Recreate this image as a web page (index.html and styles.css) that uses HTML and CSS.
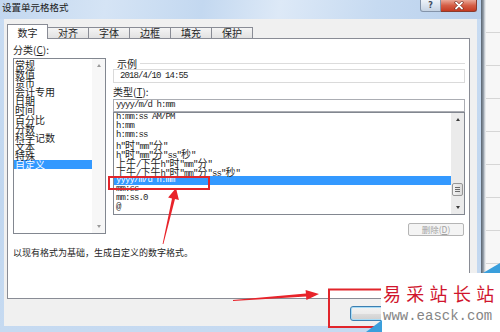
FILE: index.html
```html
<!DOCTYPE html>
<html lang="zh-CN">
<head>
<meta charset="utf-8">
<title>设置单元格格式</title>
<link rel="stylesheet" href="styles.css">
</head>
<body>
<div class="screen">
  <div class="window">
    <div class="titlebar">
      <span class="title">设置单元格格式</span>
      <div class="caption-btns">
        <span class="cbtn help">?</span>
        <span class="cbtn close"><svg width="12" height="9" viewBox="0 0 12 9"><path d="M3 1.5 L9 7.5 M9 1.5 L3 7.5" stroke="#6b1f14" stroke-width="3" stroke-linecap="round"/><path d="M3 1.5 L9 7.5 M9 1.5 L3 7.5" stroke="#ffffff" stroke-width="1.8" stroke-linecap="round"/></svg></span>
      </div>
    </div>
    <div class="client">
      <div class="tabs">
        <span class="tab active">数字</span>
        <span class="tab">对齐</span>
        <span class="tab">字体</span>
        <span class="tab">边框</span>
        <span class="tab">填充</span>
        <span class="tab">保护</span>
      </div>
      <div class="panel">
        <div class="left">
          <div class="label">分类(<u>C</u>):</div>
          <div class="listbox cat">
            <ul class="items">
              <li>常规</li>
              <li>数值</li>
              <li>货币</li>
              <li>会计专用</li>
              <li>日期</li>
              <li>时间</li>
              <li>百分比</li>
              <li>分数</li>
              <li>科学记数</li>
              <li>文本</li>
              <li>特殊</li>
              <li class="sel">自定义</li>
            </ul>
            <div class="vscroll light">
              <span class="arr up"></span>
              <span class="arr down"></span>
            </div>
          </div>
        </div>
        <div class="right">
          <div class="group-head"><span>示例</span></div>
          <div class="sample mono">2018/4/10 14:55</div>
          <div class="label">类型(<u>T</u>):</div>
          <div class="input mono">yyyy/m/d h:mm</div>
          <div class="listbox fmt">
            <ul class="items mono">
              <li>h:mm:ss AM/PM</li>
              <li>h:mm</li>
              <li>h:mm:ss</li>
              <li>h"<span class="c">时</span>"mm"<span class="c">分</span>"</li>
              <li>h"<span class="c">时</span>"mm"<span class="c">分</span>"ss"<span class="c">秒</span>"</li>
              <li><span class="c">上午</span>/<span class="c">下午</span>h"<span class="c">时</span>"mm"<span class="c">分</span>"</li>
              <li><span class="c">上午</span>/<span class="c">下午</span>h"<span class="c">时</span>"mm"<span class="c">分</span>"ss"<span class="c">秒</span>"</li>
              <li class="sel">yyyy/m/d h:mm</li>
              <li>mm:ss</li>
              <li>mm:ss.0</li>
              <li>@</li>
            </ul>
            <div class="vscroll dark">
              <span class="arr up"></span>
              <span class="track"></span>
              <span class="thumb"><i></i><i></i><i></i></span>
              <span class="arr down"></span>
            </div>
          </div>
          <div class="btnrow"><span class="btn-del">删除(<u>D</u>)</span></div>
        </div>
        <div class="desc">以现有格式为基础，生成自定义的数字格式。</div>
      </div>
      <div class="footer">
        <span class="btn ok">确定</span>
        <span class="btn">取消</span>
      </div>
    </div>
  </div>
  <div class="sheet"></div>

  <svg class="annot" width="500" height="332" viewBox="0 0 500 332">
    <rect x="109" y="177" width="100" height="12" fill="none" stroke="#e1252b" stroke-width="2"/>
    <rect x="329" y="289.5" width="80" height="37.5" fill="none" stroke="#e1252b" stroke-width="2"/>
    <polygon points="176,188 178.9,199.9 175,199 163.4,244 162.6,244 172,198.4 168.1,197.5" fill="#e8232a"/>
    <polygon points="319,294 306.4,300 306.1,296.6 233,301 233,300 305.9,293.6 305.6,290" fill="#e8232a"/>
  </svg>

  <div class="watermark">
    <svg class="wm-bg" width="136" height="70" viewBox="0 0 136 70">
      <rect x="17" y="11" width="119" height="59" fill="#ffffff"/>
      <polygon points="119,11 136,1 136,11" fill="#3a9fdc"/>
      <polygon points="2,70 18,58 18,70" fill="#3a9fdc"/>
    </svg>
    <div class="wm-cn">易采站长站</div>
    <div class="wm-en">www.easck.com</div>
  </div>
</div>
</body>
</html>
```
FILE: styles.css
```css
* { box-sizing: border-box; margin: 0; padding: 0; }
html, body { width: 500px; height: 332px; overflow: hidden; }
body {
  font-family: "Noto Sans CJK SC", "Noto Sans", sans-serif;
  color: #1e1e1e;
  background: #f7f7f7;
}
u { text-decoration: underline; text-underline-offset: 1px; }

.screen { position: relative; width: 500px; height: 332px; display: flex; overflow: hidden; }

.window {
  width: 481px;
  height: 332px;
  display: flex;
  flex-direction: column;
  padding-bottom: 6px;
  background: linear-gradient(180deg, #c9dcf2 0%, #c0d6ef 60%, #c6daf1 100%);
}

.titlebar {
  height: 19px;
  display: flex;
  justify-content: space-between;
  align-items: flex-start;
  background: linear-gradient(100deg, #c2d7ef 0%, #d5e4f5 22%, #c3d8f0 42%, #dde9f7 58%, #c6daf1 78%, #b9d0ec 100%);
}
.title { font-size: 9.5px; line-height: 15px; padding-left: 2px; color: #1a1a1a; }
.caption-btns { display: flex; margin-right: 4px; }
.cbtn { height: 12px; display: flex; align-items: center; justify-content: center; }
.help {
  width: 21px;
  border: 1px solid #8494aa;
  border-top: none;
  border-radius: 0 0 0 3px;
  background: linear-gradient(#eef3f9, #c6d3e3);
  font: bold 8px/10px "DejaVu Sans", sans-serif;
  color: #3d4c60;
}
.close {
  width: 36px;
  border: 1px solid #8b3b2d;
  border-top: none;
  border-left: none;
  border-radius: 0 0 3px 0;
  background: linear-gradient(#eaa898, #d55e46 50%, #c43a22);
}

.client {
  flex: 1;
  margin: 0 4px;
  background: #f0f0f0;
  padding: 5px 0 0 3px;
  display: flex;
  flex-direction: column;
}

.tabs { display: flex; align-items: flex-end; height: 14px; position: relative; z-index: 1; }
.tab {
  width: 42px;
  height: 11px;
  margin-left: -1px;
  border: 1px solid #898c95;
  border-bottom: none;
  background: linear-gradient(#f4f4f4, #e2e2e2);
  font-size: 10px;
  line-height: 10px;
  text-align: center;
}
.tab.active {
  width: 41px;
  height: 15px;
  margin-left: 0;
  margin-bottom: -1px;
  padding-top: 3px;
  background: #fff;
  position: relative;
  z-index: 2;
}

.panel {
  width: 463px;
  height: 261px;
  background: #fff;
  border: 1px solid #898c95;
  display: grid;
  grid-template-columns: 93px 352px;
  grid-template-rows: 193px auto;
  column-gap: 7px;
  padding: 5px 4px 0 5px;
}

.label { font-size: 10px; line-height: 12px; }
.left .label { margin-bottom: 2px; }

.listbox { display: flex; border: 1px solid #828790; background: #fff; overflow: hidden; }
.items { list-style: none; flex: 1; overflow: hidden; }
.items li { white-space: nowrap; }
.items li.sel { background: #3399ff; color: #fff; }

.cat { height: 176px; overflow: visible; }
.cat .items { overflow: visible; padding-top: 1px; }
.cat .items li { font-size: 10px; line-height: 9.1px; height: 9.1px; padding-left: 1px; }

.vscroll { width: 13px; display: flex; flex-direction: column; }
.vscroll.light { background: #f7f7f7; justify-content: space-between; }
.vscroll.dark { background: #ebebeb; }
.arr { height: 13px; display: flex; align-items: center; justify-content: center; }
.arr::before {
  content: "";
  border-left: 2.5px solid transparent;
  border-right: 2.5px solid transparent;
}
.arr.up::before { border-bottom: 3px solid #9a9a9a; }
.arr.down::before { border-top: 3px solid #9a9a9a; }
.dark .arr.up::before { border-bottom-color: #3c3c3c; }
.dark .arr.down::before { border-top-color: #3c3c3c; }
.track { flex: 1; }
.thumb {
  height: 13px;
  margin: 0 1px 5px;
  border: 1px solid #979797;
  border-radius: 2px;
  background: linear-gradient(90deg, #f2f2f2, #dcdcdc);
  display: flex;
  flex-direction: column;
  align-items: center;
  justify-content: center;
  gap: 1px;
}
.thumb i { display: block; width: 5px; height: 1px; background: #6a6a6a; }

.mono {
  font-family: "Liberation Mono", "Noto Sans CJK SC", monospace;
  font-size: 9px;
  letter-spacing: -0.9px;
  color: #1e1e1e;
}
.mono .c { font-family: "Noto Sans CJK SC", sans-serif; letter-spacing: 0; font-size: 10px; }
.items li.sel, .items li.sel .c { color: #fff; }

.right { display: flex; flex-direction: column; }
.group-head {
  margin-top: 13px;
  height: 12px;
  display: flex;
  align-items: center;
  padding-left: 4px;
  font-size: 10px;
}
.group-head::after { content: ""; flex: 1; border-top: 1px solid #dcdcdc; margin-left: 3px; }
.sample { height: 14px; border: 1px solid #dadada; padding-left: 6px; line-height: 12px; }
.right .label { margin-top: 3px; }
.input { margin-top: 1px; height: 13px; border: 1px solid #abadb3; padding-left: 2px; line-height: 11px; }
.fmt { height: 103px; }
.fmt .items li { line-height: 9px; height: 9px; padding-left: 2px; }

.btnrow { margin-top: 8px; display: flex; justify-content: flex-end; padding-right: 1px; }
.btn-del {
  width: 56px;
  height: 13px;
  border: 1px solid #b5b5b5;
  border-radius: 2px;
  background: #f4f4f4;
  color: #a3a3a3;
  font-size: 8.5px;
  line-height: 11px;
  text-align: center;
}

.desc { grid-column: 1 / -1; margin-top: 10px; font-size: 9px; line-height: 12px; }

.footer { flex: 1; display: flex; justify-content: flex-end; gap: 6px; padding: 7px 5px 0 0; }
.btn {
  width: 58px;
  height: 15px;
  border: 1px solid #707070;
  border-radius: 3px;
  background: linear-gradient(#f2f2f2, #ebebeb 50%, #dddddd 51%, #cfcfcf);
  font-size: 10px;
  line-height: 13px;
  text-align: center;
}
.btn.ok {
  border-color: #3c7fb1;
  box-shadow: inset 0 0 0 1px #a9dcf6;
  padding-left: 34px;
  text-align: left;
}

.sheet {
  flex: 1;
  background:
    linear-gradient(90deg, #56616d, #a4adb7 3px, #e6e9ec 4px) 0 0 / 5px 100% no-repeat,
    repeating-linear-gradient(180deg, transparent 0 32px, #d6d6d6 32px 33px),
    #f7f7f7;
}

.annot { position: absolute; left: 0; top: 0; pointer-events: none; }

.watermark {
  position: absolute;
  left: 364px;
  top: 262px;
  width: 136px;
  height: 70px;
  padding: 20px 0 0 19px;
}
.wm-bg { position: absolute; left: 0; top: 0; }
.wm-cn {
  position: relative;
  font-family: "Noto Sans CJK SC", serif;
  font-size: 18px;
  line-height: 22px;
  letter-spacing: 5.3px;
  color: #d0152d;
  white-space: nowrap;
}
.wm-en {
  position: relative;
  margin-top: 6px;
  font-family: "Liberation Mono", monospace;
  font-size: 14px;
  line-height: 12px;
  color: #858585;
  white-space: nowrap;
}
```
